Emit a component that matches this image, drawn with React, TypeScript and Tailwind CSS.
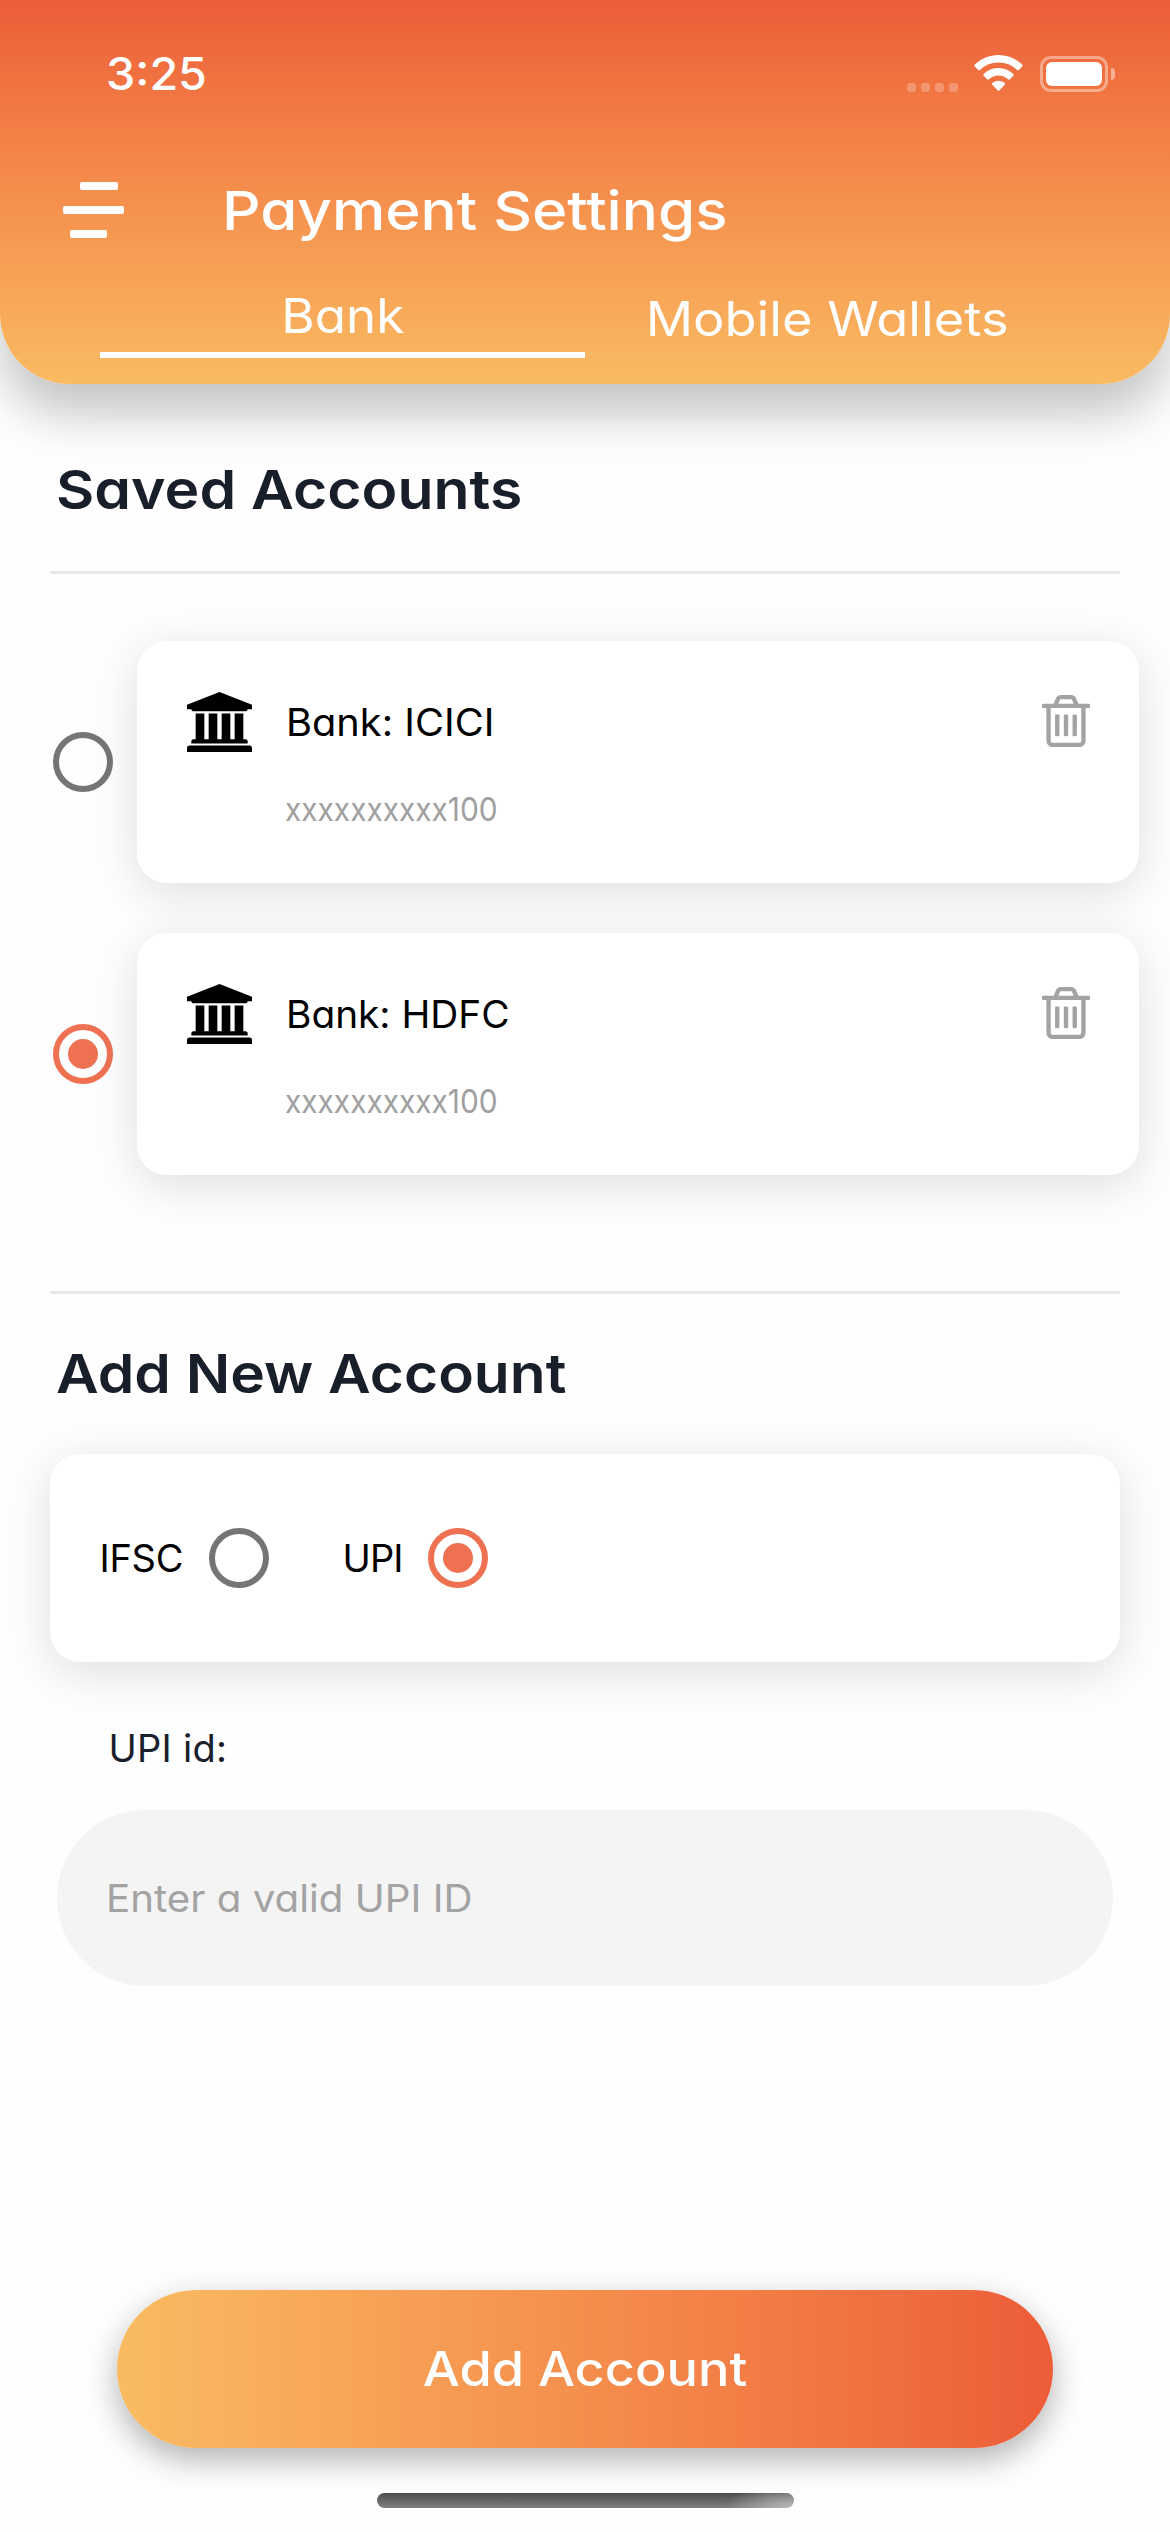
function StatusIcons() {
  return (
    <div className="flex h-[36px] items-start">
      <div className="mt-[27px] flex gap-[5px]">
        <span className="h-[9px] w-[9px] rounded-[3px] bg-white/25" />
        <span className="h-[9px] w-[9px] rounded-[3px] bg-white/25" />
        <span className="h-[9px] w-[9px] rounded-[3px] bg-white/25" />
        <span className="h-[9px] w-[9px] rounded-[3px] bg-white/25" />
      </div>
      <svg className="ml-[16px] mt-[-1px] h-[36px] w-[49px]" viewBox="0 0 49 36" fill="#fff">
        <path d="M24.5 0C33.6 0 41.9 3.6 48.1 9.5c.6.6.6 1.3.1 1.9l-3.4 3.5c-.5.5-1.200.5-1.800 0A26.800 26.800 0 0 0 24.500 7.500 26.800 26.800 0 0 0 6 14.900c-.6.5-1.300.5-1.800 0L.8 11.400c-.5-.6-.5-1.300.1-1.900C7.100 3.600 15.400 0 24.500 0Z" />
        <path d="M24.500 13c5.700 0 10.900 2.200 14.800 5.900.6.6.6 1.300.1 1.800l-3.500 3.600c-.5.5-1.200.5-1.800 0a14 14 0 0 0-19.200 0c-.6.5-1.300.5-1.800 0l-3.500-3.600c-.5-.5-.5-1.200.1-1.800A21.400 21.400 0 0 1 24.500 13Z" />
        <path d="M24.500 25.800c2.300 0 4.500.9 6.100 2.300.6.5.6 1.200.1 1.700l-5.200 5.500c-.6.6-1.400.6-2 0l-5.200-5.500c-.5-.5-.5-1.200.1-1.700a9.300 9.300 0 0 1 6.100-2.300Z" />
      </svg>
      <div className="ml-[17px] h-[36px] w-[68px] rounded-[11px] border-[3px] border-white/40 p-[3px]">
        <div className="h-full w-full rounded-[6px] bg-white" />
      </div>
      <div className="ml-[3px] mt-[12px] h-[12px] w-[4px] rounded-r-full bg-white/45" />
    </div>
  );
}

function BankIcon() {
  return (
    <svg className="h-[60px] w-[65px] shrink-0" viewBox="0 0 1920 1792" fill="#000" preserveAspectRatio="none">
      <path d="M960 0l960 384v128h-128q0 26-20.5 45t-48.500 19h-1526q-28 0-48.500-19t-20.500-45h-128v-128zM256 640h256v768h128v-768h256v768h128v-768h256v768h128v-768h256v768h59q28 0 48.500 19t20.500 45v64h-1664v-64q0-26 20.500-45t48.500-19h59v-768zM1851 1600q28 0 48.500 19t20.500 45v128h-1920v-128q0-26 20.500-45t48.500-19h1782z" />
    </svg>
  );
}

function TrashIcon() {
  return (
    <svg className="mb-[2px] h-[52px] w-[48px] shrink-0" viewBox="0 0 1408 1536" fill="#a3a3a3" preserveAspectRatio="none">
      <path d="M512 608v576q0 14-9 23t-23 9h-64q-14 0-23-9t-9-23v-576q0-14 9-23t23-9h64q14 0 23 9t9 23zM768 608v576q0 14-9 23t-23 9h-64q-14 0-23-9t-9-23v-576q0-14 9-23t23-9h64q14 0 23 9t9 23zM1024 608v576q0 14-9 23t-23 9h-64q-14 0-23-9t-9-23v-576q0-14 9-23t23-9h64q14 0 23 9t9 23zM1152 1332v-948h-896v948q0 22 7 40.500t14.500 27 10.500 8.500h832q3 0 10.500-8.500t14.500-27 7-40.500zM480 256h448l-48-117q-7-9-17-11h-317q-10 2-17 11zM1408 288v64q0 14-9 23t-23 9h-96v948q0 83-47 143.500t-113 60.500h-832q-66 0-113-58.500t-47-141.500v-952h-96q-14 0-23-9t-9-23v-64q0-14 9-23t23-9h309l70-167q15-37 54-63t79-26h320q40 0 79 26t54 63l70 167h309q14 0 23 9t9 23z" />
    </svg>
  );
}

function Radio({ checked }: { checked: boolean }) {
  return checked ? (
    <div className="flex h-[60px] w-[60px] shrink-0 items-center justify-center rounded-full border-[6px] border-[#ee7152]">
      <div className="h-[30px] w-[30px] rounded-full bg-[#ee7152]" />
    </div>
  ) : (
    <div className="h-[60px] w-[60px] shrink-0 rounded-full border-[6px] border-[#757575]" />
  );
}

const accounts = [
  { label: "Bank: ICICI", number: "xxxxxxxxxx100", selected: false, stretch: "scale-x-[1.046]" },
  { label: "Bank: HDFC", number: "xxxxxxxxxx100", selected: true, stretch: "scale-x-[1.021]" },
];

export default function App() {
  return (
    <div className="flex h-[2532px] w-[1170px] flex-col overflow-hidden bg-[#fefefe] font-['Inter',sans-serif] whitespace-nowrap [font-feature-settings:'cv11']">
      <header className="flex h-[384px] shrink-0 flex-col rounded-b-[70px] bg-linear-to-b from-[#ec5c38] to-[#f9bb62] text-white shadow-[0_30px_50px_rgba(0,0,0,0.23)]">
        <div className="flex h-[148px] items-center justify-between pr-[55px] pl-[105.5px]">
          <span className="origin-left scale-x-[1.048] text-[44.5px] leading-none font-medium">3:25</span>
          <StatusIcons />
        </div>
        <div className="flex h-[124px] items-center pl-[63px]">
          <div className="flex w-[159px] flex-col gap-[16px]">
            <span className="ml-[17px] h-[8px] w-[38px] rounded-[2px] bg-white" />
            <span className="h-[8px] w-[61px] rounded-[2px] bg-white" />
            <span className="ml-[7px] h-[8px] w-[37px] rounded-[2px] bg-white" />
          </div>
          <h1 className="mt-[2px] origin-left scale-x-[1.113] text-[54px] leading-none font-medium">Payment Settings</h1>
        </div>
        <nav className="mt-[8px] flex h-[78px] px-[100px] text-[48px] leading-none">
          <div className="flex w-[485px] items-center justify-center border-b-[6px] border-white">
            <span className="scale-x-[1.063]">Bank</span>
          </div>
          <div className="flex w-[485px] items-center justify-center">
            <span className="scale-x-[1.092]">Mobile Wallets</span>
          </div>
        </nav>
      </header>

      <h2 className="mt-[70px] ml-[56.4px] h-[72px] origin-left scale-x-[1.091] self-start text-[54px] leading-[72px] font-semibold text-[#181f2a]">Saved Accounts</h2>
      <div className="mx-[50px] mt-[45px] h-[3px] shrink-0 bg-[#e9e9e9]" />

      <div className="mt-[67px] flex flex-col gap-[50px]">
        {accounts.map((a) => (
          <div key={a.label} className="flex items-center gap-[24px] pr-[31px] pl-[53px]">
            <Radio checked={a.selected} />
            <div className="h-[242px] flex-1 rounded-[30px] bg-white pt-[51px] pr-[49px] pl-[50px] shadow-[0_10px_48px_rgba(0,0,0,0.13)]">
              <div className="flex h-[60px] items-center">
                <BankIcon />
                <span className={`mr-auto ml-[34px] origin-left text-[38px] leading-none text-black ${a.stretch}`}>{a.label}</span>
                <TrashIcon />
              </div>
              <div className="mt-[33px] ml-[98px] w-fit origin-left scale-x-[0.904] text-[33px] leading-[48px] text-[#a0a0a0]">{a.number}</div>
            </div>
          </div>
        ))}
      </div>

      <div className="mx-[50px] mt-[116px] h-[3px] shrink-0 bg-[#e9e9e9]" />
      <h2 className="mt-[44px] ml-[56.4px] h-[72px] origin-left scale-x-[1.086] self-start text-[54px] leading-[72px] font-semibold text-[#181f2a]">Add New Account</h2>

      <div className="mx-[50px] mt-[44px] flex h-[208px] shrink-0 items-center rounded-[30px] bg-white pl-[49.6px] text-[38px] leading-none text-black shadow-[0_10px_48px_rgba(0,0,0,0.13)]">
        <span className="w-[109.4px] tracking-[-0.31px]">IFSC</span>
        <Radio checked={false} />
        <span className="ml-[73.5px] w-[85.5px] tracking-[-0.88px]">UPI</span>
        <Radio checked={true} />
      </div>

      <div className="mt-[58px] ml-[108.6px] text-[38px] leading-[56px] tracking-[0.23px] text-[#18202c]">UPI id:</div>
      <div className="mx-[57px] mt-[34px] flex h-[176px] shrink-0 items-center rounded-full bg-[#f4f4f4] pl-[49px] text-[38px] leading-none text-[#a3a3a3]">
        <span className="origin-left scale-x-[1.06]">Enter a valid UPI ID</span>
      </div>

      <button className="mx-[117px] mt-[304px] flex h-[158px] shrink-0 items-center justify-center rounded-full bg-linear-to-r from-[#f9bb62] to-[#ec5c38] text-[48px] leading-none font-medium text-white shadow-[0_12px_32px_rgba(0,0,0,0.3)]">
        <span className="scale-x-[1.089]">Add Account</span>
      </button>
      <div className="mt-[45px] ml-[377px] h-[15px] w-[417px] shrink-0 rounded-full bg-[radial-gradient(ellipse_70px_24px_at_100%_100%,rgba(190,190,190,0.95),rgba(190,190,190,0)),linear-gradient(to_bottom,#4c4e4d,#7f7f7f)]" />
    </div>
  );
}
